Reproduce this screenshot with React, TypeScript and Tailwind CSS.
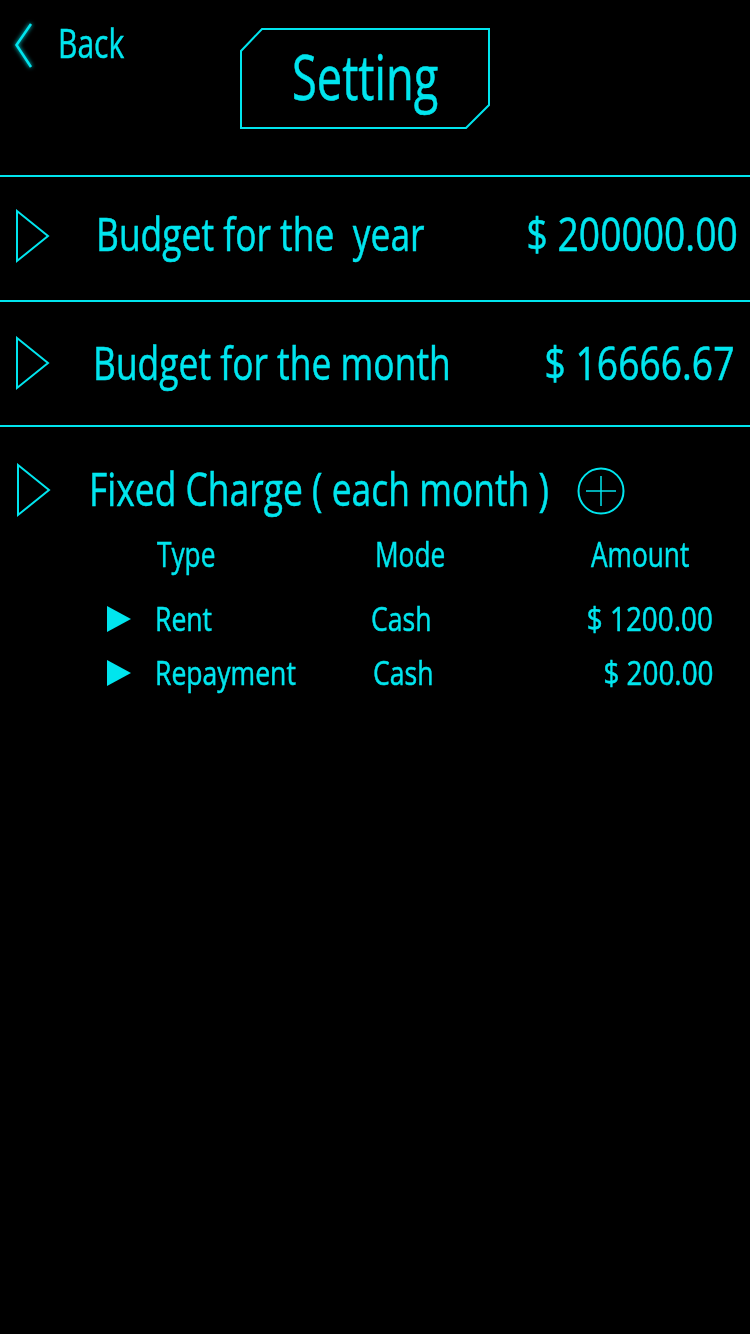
import React from "react";

const C = "#00e5ee";

// condensed look: squeeze an inline-block horizontally
function Sq({ children, k = 0.77, right = false }: { children: React.ReactNode; k?: number; right?: boolean }) {
  return (
    <span
      className={`inline-block whitespace-pre ${right ? "origin-right" : "origin-left"}`}
      style={{ transform: `scaleX(${k})` }}
    >
      {children}
    </span>
  );
}

function Outline() {
  return (
    <svg width="36" height="56" viewBox="0 0 36 56" className="shrink-0">
      <polygon points="2,2 33,27 2,52" fill="none" stroke={C} strokeWidth="2" />
    </svg>
  );
}

function Solid() {
  return (
    <svg width="26" height="28" viewBox="0 0 26 28" className="shrink-0">
      <polygon points="1,1 25,14 1,27" fill={C} />
    </svg>
  );
}

const rows = [
  { type: "Rent", mode: "Cash", amount: "$ 1200.00", modeMl: "ml-0" },
  { type: "Repayment", mode: "Cash", amount: "$ 200.00", modeMl: "ml-[2px]" },
];

export default function App() {
  return (
    <div className="w-[750px] h-[1334px] bg-black text-[#00e5ee] font-medium font-['Open_Sans',sans-serif] [-webkit-text-stroke:0.5px_#00e5ee] overflow-hidden">
      {/* header */}
      <div className="h-[175px] flex items-start">
        <div className="flex items-start pl-[14px] pt-[22px] w-[240px]">
          <svg width="20" height="48" viewBox="0 0 20 48" className="drop-shadow-[0_0_2px_#00e5ee]">
            <polyline points="17,2 2.5,23 17,45" fill="none" stroke={C} strokeWidth="2.5" />
          </svg>
          <span className="ml-[24px] text-[40px] leading-none mt-[1px]">
            <Sq k={0.75}>Back</Sq>
          </span>
        </div>
        <div className="relative mt-[28px] w-[250px] h-[101px] flex items-center">
          <svg className="absolute inset-0" width="250" height="101" viewBox="0 0 250 101">
            <polygon points="22,1 249,1 249,77 226,100 1,100 1,23" fill="none" stroke={C} strokeWidth="2" />
          </svg>
          <span className="relative text-[62px] leading-none -mt-[6px] ml-[52px]">
            <Sq k={0.73}>Setting</Sq>
          </span>
        </div>
      </div>
      <div className="h-[2px] bg-[#00e5ee]" />

      {/* budget year */}
      <div className="h-[123px] flex items-center pl-[15px] pr-[12px] pb-[4px]">
        <Outline />
        <span className="ml-[45px] text-[46px] leading-none -mt-[8px] flex-1 min-w-0">
          <Sq>{"Budget for the  year"}</Sq>
        </span>
        <span className="text-[46px] leading-none -mt-[8px] shrink-0 w-[220px] flex justify-end">
          <Sq k={0.81} right>$ 200000.00</Sq>
        </span>
      </div>
      <div className="h-[2px] bg-[#00e5ee]" />

      {/* budget month */}
      <div className="h-[123px] flex items-center pl-[15px] pr-[16px]">
        <Outline />
        <span className="ml-[42px] text-[46px] leading-none -mt-[4px] flex-1 min-w-0">
          <Sq>Budget for the month</Sq>
        </span>
        <span className="text-[46px] leading-none -mt-[4px] shrink-0 w-[200px] flex justify-end">
          <Sq k={0.81} right>$ 16666.67</Sq>
        </span>
      </div>
      <div className="h-[2px] bg-[#00e5ee]" />

      {/* fixed charge */}
      <div className="pt-[36px] flex items-center pl-[16px]">
        <Outline />
        <span className="ml-[37px] text-[46px] leading-none -mt-[6px] w-[488px]">
          <Sq>Fixed Charge ( each month )</Sq>
        </span>
        <svg width="48" height="48" viewBox="0 0 48 48" className="shrink-0">
          <circle cx="24" cy="24" r="22.5" fill="none" stroke={C} strokeWidth="2" />
          <line x1="24" y1="9" x2="24" y2="39" stroke={C} strokeWidth="1.5" />
          <line x1="9" y1="24" x2="39" y2="24" stroke={C} strokeWidth="1.5" />
        </svg>
      </div>

      <div className="mt-[17px] flex text-[35px] leading-none">
        <span className="ml-[157px] w-[218px]"><Sq k={0.75}>Type</Sq></span>
        <span className="w-[216px]"><Sq k={0.75}>Mode</Sq></span>
        <span><Sq k={0.75}>Amount</Sq></span>
      </div>

      <div className="mt-[28px] flex flex-col gap-[14px]">
        {rows.map((r) => (
          <div key={r.type} className="flex items-center h-[40px] text-[32px] leading-none pr-[37px]">
            <span className="ml-[106px] w-[49px]"><Solid /></span>
            <span className="w-[216px]"><Sq k={0.83}>{r.type}</Sq></span>
            <span className={`w-[100px] ${r.modeMl}`}><Sq k={0.83}>{r.mode}</Sq></span>
            <span className="flex-1 min-w-0 flex justify-end"><Sq k={0.87} right>{r.amount}</Sq></span>
          </div>
        ))}
      </div>
    </div>
  );
}
